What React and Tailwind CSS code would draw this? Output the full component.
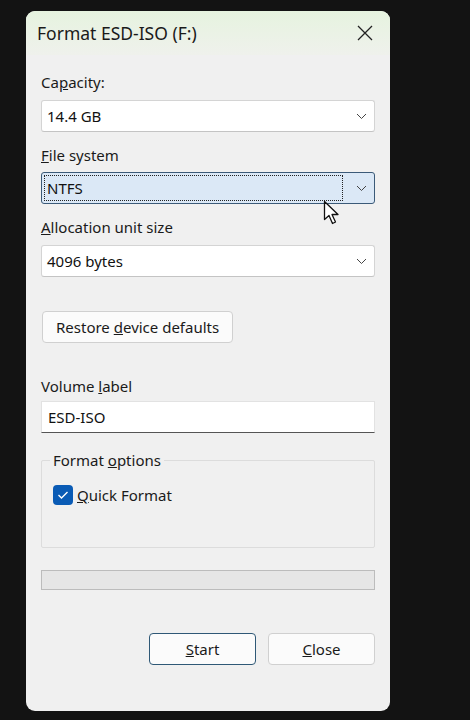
import React from 'react';

const font = { fontFamily: '"Noto Sans", "Open Sans", sans-serif' };

function Chevron() {
  return (
    <svg width="11" height="7" viewBox="0 0 11 7" className="shrink-0">
      <path d="M1 1 L5.5 5.5 L10 1" fill="none" stroke="#444" strokeWidth="1" />
    </svg>
  );
}

function Select({ value, active }) {
  if (active) {
    return (
      <div className="relative flex items-center h-[32px] bg-[#dbe8f6] border border-[#3b5a78] rounded-[3px] pl-[2px] pr-[7px]">
        <div className="flex-1 h-[26px] flex items-center border border-dotted border-[#222] pl-[2px] text-[15px] text-[#111]">
          {value}
        </div>
        <div className="w-[24px] flex justify-end">
          <Chevron />
        </div>
        {/* mouse pointer */}
        <svg width="18" height="26" viewBox="0 0 18 26" className="absolute left-[281px] top-[27px]">
          <path d="M1.5 1.5 L1.5 19.5 L6 15.5 L9.5 23.5 L12.5 22 L9 14.5 L15 14.5 Z" fill="#fff" stroke="#111" strokeWidth="1.3" strokeLinejoin="round" />
        </svg>
      </div>
    );
  }
  return (
    <div className="flex items-center h-[32px] bg-white border border-[#d4d4d4] border-b-[#c4c4c4] rounded-[3px] pl-[5px] pr-[7px]">
      <span className="flex-1 text-[15px] text-[#111]">{value}</span>
      <Chevron />
    </div>
  );
}

function Label({ children, className = '' }) {
  return <div className={`text-[15px] leading-[20px] text-[#1a1a1a] ${className}`}>{children}</div>;
}

export default function App() {
  return (
    <div className="w-[470px] h-[720px] bg-[#131313] pt-[11px] pl-[26px]" style={font}>
      <div className="w-[364px] h-[700px] bg-[#f0f0f0] rounded-[9px] overflow-hidden flex flex-col">
        {/* Title bar */}
        <div className="h-[44px] flex items-center justify-between pl-[11px] pr-[16px] bg-gradient-to-b from-[#e6f3df] to-[#eff1ec]">
          <span className="text-[17.5px] text-[#1a1a1a]">Format ESD-ISO (F:)</span>
          <svg width="18" height="18" viewBox="0 0 18 18">
            <path d="M2 2 L16 16 M16 2 L2 16" stroke="#222" strokeWidth="1.3" />
          </svg>
        </div>

        <div className="flex flex-col px-[15px]">
          <Label className="mt-[17px]">Ca<u>p</u>acity:</Label>
          <div className="mt-[8px]">
            <Select value="14.4 GB" />
          </div>

          <Label className="mt-[13px]"><u>F</u>ile system</Label>
          <div className="mt-[7px]">
            <Select value="NTFS" active />
          </div>

          <Label className="mt-[13px]"><u>A</u>llocation unit size</Label>
          <div className="mt-[8px]">
            <Select value="4096 bytes" />
          </div>

          <div className="mt-[34px] ml-[1px]">
            <button className="h-[32px] px-[13px] bg-[#fbfbfb] border border-[#d0d0d0] rounded-[4px] text-[15px] text-[#1a1a1a]">
              Restore <u>d</u>evice defaults
            </button>
          </div>

          <Label className="mt-[33px]">Volume <u>l</u>abel</Label>
          <div className="mt-[5px] h-[32px] flex items-center bg-white border border-[#e2e2e2] border-b-[#555] pl-[6px] text-[15px] text-[#111]">
            ESD-ISO
          </div>

          {/* Format options group */}
          <div className="relative mt-[27px] h-[88px] border border-[#dcdcdc] rounded-[2px]">
            <span className="absolute left-[8px] -top-[11px] px-[3px] bg-[#f0f0f0] text-[15px] leading-[20px] text-[#1a1a1a]">
              Format <u>o</u>ptions
            </span>
            <div className="flex items-center gap-[4px] mt-[23px] ml-[11px]">
              <div className="w-[20px] h-[20px] rounded-[4px] bg-[#0a5bb5] flex items-center justify-center">
                <svg width="12" height="10" viewBox="0 0 12 10">
                  <path d="M1.5 5 L4.5 8 L10.5 2" fill="none" stroke="#fff" strokeWidth="1.4" />
                </svg>
              </div>
              <span className="text-[15px] text-[#1a1a1a]"><u>Q</u>uick Format</span>
            </div>
          </div>

          {/* Progress bar */}
          <div className="mt-[22px] h-[20px] bg-[#e6e6e6] border border-[#bcbcbc]" />

          <div className="mt-[43px] flex justify-end gap-[12px]">
            <button className="w-[107px] h-[32px] bg-[#fbfbfb] border border-[#2f5876] rounded-[4px] text-[15px] text-[#1a1a1a]">
              <u>S</u>tart
            </button>
            <button className="w-[107px] h-[32px] bg-[#fbfbfb] border border-[#d0d0d0] rounded-[4px] text-[15px] text-[#1a1a1a]">
              <u>C</u>lose
            </button>
          </div>
        </div>
      </div>
    </div>
  );
}
